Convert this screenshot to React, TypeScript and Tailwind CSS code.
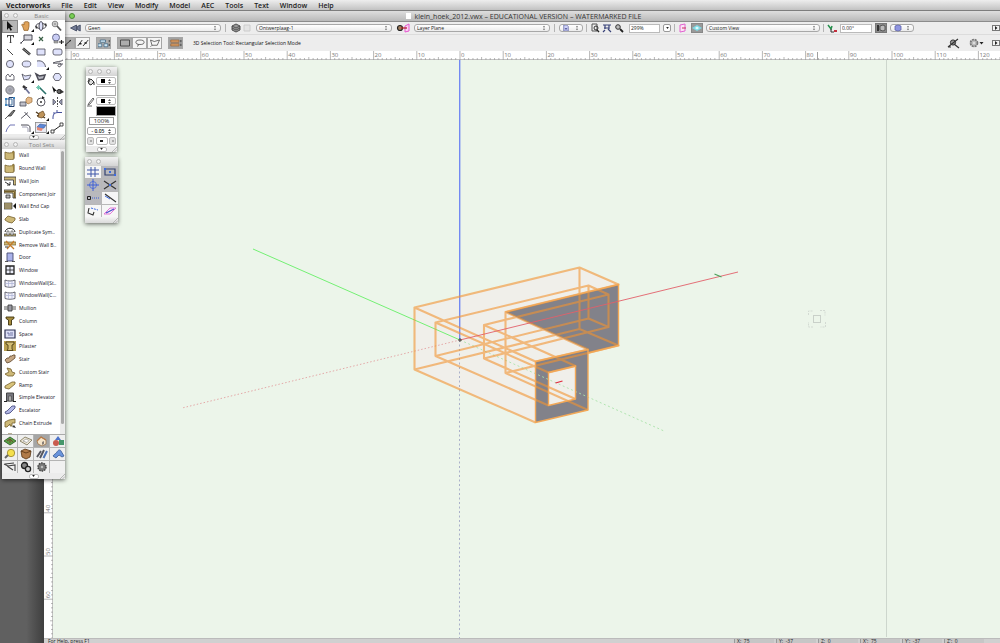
import React from "react";

type Glyph = { name: string; art: React.ReactNode };

const lav = "#dfe2fb";
const ink = "#4a4a55";
const tan = "#cdb877";
const brown = "#75602c";

const menus = ["File", "Edit", "View", "Modify", "Model", "AEC", "Tools", "Text", "Window", "Help"];

const flyout = <path d="M13 12h3v-3z" fill="#111" />;

const basicTools: Glyph[] = [
  { name: "Selection", art: <path d="M5 1l6 6H8.500l1.500 3-1.500.8L7 7.800 5 10z" fill="#111" /> },
  { name: "Pan", art: <><path d="M4.500 6l-1-1 1-1 1.500 1V2.500l1-1 1 .7 1-.9 1 .9 1 .2v4l-1 4H6z" fill="#e0a35a" stroke="#8a5a22" strokeWidth=".7" />{flyout}</> },
  { name: "Flyover", art: <><ellipse cx="8" cy="6" rx="5" ry="2.500" fill="none" stroke={ink} /><ellipse cx="8" cy="6" rx="2" ry="4.500" fill={lav} stroke={ink} /><path d="M3 9l-1-3 3 1zM13 3l1 3-3-1z" fill="#333" /></> },
  { name: "Zoom", art: <><circle cx="6" cy="4" r="2.800" fill="#ddd" stroke="#888" /><path d="M8 6l4 4.500" stroke="#555" strokeWidth="1.800" /><path d="M6 2.500v3M4.500 4h3" stroke="#777" strokeWidth=".6" /></> },
  { name: "Text", art: <path d="M5 2h7v2.500h-.7L10.700 3H9.100v6.400l1.200.6H6.800L8 9.400V3H6.300L5.700 4.500H5z" fill="#444" /> },
  { name: "Callout", art: <><path d="M6 2h8v5H6z" fill="#d7d7df" stroke={ink} /><path d="M6 7L3 10M2 10h2" stroke={ink} fill="none" />{flyout}</> },
  { name: "Locus", art: <path d="M6 4l4 4M10 4l-4 4" stroke="#395f45" strokeWidth="1.200" /> },
  { name: "Symbol", art: <><circle cx="7" cy="4.500" r="3.500" fill="#c9cdf5" stroke="#6a6d90" /><path d="M5 8h4v2H5z" fill="#aaa" stroke="#666" strokeWidth=".5" /><path d="M10 9h5M12.500 7v4" stroke="#222" strokeWidth="1.200" /></> },
  { name: "Line", art: <path d="M5 3l6 6" stroke="#333" strokeWidth=".9" /> },
  { name: "Double Line", art: <><path d="M5 2.500l7 6" stroke="#333" strokeWidth="2.600" /><path d="M5 2.500l7 6" stroke="#bbb" strokeWidth=".7" /></> },
  { name: "Rectangle", art: <path d="M4 3h8v6H4z" fill={lav} stroke={ink} strokeWidth=".8" /> },
  { name: "Rounded Rectangle", art: <rect x="4" y="3" width="9" height="6" rx="2" fill={lav} stroke={ink} strokeWidth=".8" /> },
  { name: "Circle", art: <circle cx="8" cy="6" r="3.600" fill={lav} stroke={ink} strokeWidth=".8" /> },
  { name: "Oval", art: <ellipse cx="8.500" cy="6" rx="4.300" ry="3" fill={lav} stroke={ink} strokeWidth=".8" /> },
  { name: "Arc", art: <><path d="M4 3c5-1 8 2 8.500 6H4z" fill={lav} /><path d="M4 3c5-1 8 2 8.500 6" fill="none" stroke={ink} strokeWidth=".9" />{flyout}</> },
  { name: "Freehand", art: <path d="M14 2c-2 2-6 1-10 3 3 1 7-1 8 1s-2 4-3 2 3-2 5-2" fill="none" stroke={ink} strokeWidth=".9" /> },
  { name: "Polyline", art: <path d="M4 9V5l2-2 2 3 2-3 2 2v4z" fill="#fff" stroke={ink} strokeWidth=".8" /> },
  { name: "Polygon", art: <><path d="M4 3l3 2 6-1-2 4-5 1z" fill={lav} stroke={ink} strokeWidth=".8" />{flyout}</> },
  { name: "Double Polygon", art: <path d="M3 3l3.500 2L12 4l-1.500 4-5 1z" fill="#b9bac4" stroke={ink} strokeWidth="1.500" /> },
  { name: "Regular Polygon", art: <path d="M6.200 2.500h4L12.500 6l-2.300 3.500h-4L4 6z" fill={lav} stroke={ink} strokeWidth=".8" /> },
  { name: "Spiral", art: <><circle cx="8" cy="6" r="4.300" fill="#9a9ca6" stroke="#777" strokeWidth=".6" /><circle cx="8" cy="6" r="2.500" fill="none" stroke="#c4c5cd" strokeWidth=".6" /></> },
  { name: "Eyedropper", art: <><path d="M5 2l3 2.500" stroke="#333" strokeWidth="2.400" /><path d="M7 4l4.500 5.500" stroke="#6f7399" strokeWidth="1.800" /><path d="M9 3L6.500 6" stroke="#333" /></> },
  { name: "Visibility", art: <><path d="M7 4l6 6" stroke="#2a7068" strokeWidth="1.600" /><path d="M5.500 1v5M3 3.500h5M4 2l3 3M7 2L4 5" stroke="#59bda3" strokeWidth=".8" /></> },
  { name: "Select Similar", art: <><path d="M3 2l5 5H6L5 9z" fill="#111" /><circle cx="10" cy="7.500" r="2" fill="#666" stroke="#222" /><path d="M11 5l4 3-4 2z" fill="#333" /></> },
  { name: "Reshape", art: <><path d="M4 3h6v6H4z" fill="none" stroke="#3c6d9b" /><path d="M7 1.500h5v9H7z" fill="none" stroke="#223f70" /><path d="M3 2h2v2H3zM3 8h2v2H3zM11 1h2v2h-2z" fill="#3d83bd" /></> },
  { name: "Move", art: <><path d="M2 6h6v4H2z" fill="#bdbec8" stroke={ink} strokeWidth=".8" /><path d="M8 3l2-2 4 1v4l-4 2-2-2z" fill="#e5b98a" stroke="#9c713a" strokeWidth=".7" /></> },
  { name: "Rotate", art: <><circle cx="8" cy="6" r="4" fill="#fff" stroke={ink} strokeWidth=".9" /><circle cx="8" cy="6" r="1" fill="#333" /><path d="M9 0l3 2-3 1z" fill="#222" /></> },
  { name: "Mirror", art: <><path d="M8.500 1v10" stroke="#222" strokeWidth=".8" strokeDasharray="2 1" /><path d="M4 3l3 3-3 3zM13 3l-3 3 3 3z" fill="#999cb5" stroke={ink} strokeWidth=".7" /></> },
  { name: "Split", art: <><path d="M3 10l4-4" stroke="#333" strokeWidth=".8" /><path d="M6 7l5-5.500h2L9 7z" fill="#777" stroke="#333" strokeWidth=".8" /></> },
  { name: "Connect", art: <path d="M3 9.500l7-6M6.500 3l6 6.500" stroke={ink} strokeWidth=".9" /> },
  { name: "Trim", art: <><path d="M3 3l9 6M4 7l7-2" stroke="#533d20" strokeWidth="1.500" /><path d="M6 4l4-2 2 4-3 3-4-1z" fill="#be945b" stroke="#5f421c" strokeWidth=".7" />{flyout}</> },
  { name: "Fillet", art: <path d="M4 10V8c0-3 2-4.500 5-4.500h4M4 4h2M8 1v2" stroke="#434f9b" fill="none" /> },
  { name: "Chamfer", art: <path d="M4 10l1-3 3-4h5" stroke="#7075b5" fill="none" /> },
  { name: "Offset", art: <><path d="M3 3h6c2 0 3 1 3 3v4" stroke={ink} fill="none" /><path d="M4 5h4c1.500 0 2 1 2 2v3" stroke="#8587a0" fill="none" strokeWidth=".8" />{flyout}</> },
  { name: "Clip", art: <><rect x="2.500" y=".5" width="11" height="10" fill="#e9e9f1" stroke="#888" strokeWidth=".8" /><path d="M4 5l3-3 6 1-2 3-6 1z" fill="#5c87d6" stroke="#2c4f92" strokeWidth=".5" /><path d="M4 5l6 1.500-1.500 2.500L4 8z" fill="#e58a76" />{flyout}</> },
  { name: "Dimension", art: <><path d="M4 9l7-5" stroke="#222" /><path d="M2 8h3v3H2zM11 1h3v3h-3z" fill="#fff" stroke="#222" strokeWidth=".8" /></> },
];

const slabArt = <path d="M1 5l3-3 7 2v2L8 9 4 8 1 6z" fill={tan} stroke={brown} strokeWidth=".8" />;
const wallArt = (
  <>
    <path d="M1 2c3 1.300 6 1.300 9 0v7c-3 1-6 1-9 0z" fill={tan} stroke={brown} strokeWidth=".8" />
    <path d="M8 2l2-1v7" fill="#a48d47" stroke={brown} strokeWidth=".6" />
  </>
);
const curtainArt = (
  <>
    <path d="M1 2c3 1.300 7 1.300 10 0v6.500c-3 1-7 1-10 0z" fill="#f1f1fb" stroke={ink} strokeWidth=".8" />
    <path d="M4.500 3v6M8 3v6M1 5.500h10" stroke="#abb0d2" strokeWidth=".7" />
  </>
);

const buildingTools: Glyph[] = [
  { name: "Wall", art: wallArt },
  { name: "Round Wall", art: wallArt },
  { name: "Wall Join", art: <><path d="M0 1h12v8H9.500V4H0z" fill={tan} stroke="#333" strokeWidth=".8" /><path d="M1 6l5 3M6 6v3H3" stroke="#222" strokeWidth=".9" fill="none" /></> },
  { name: "Component Joir", art: <><path d="M0 1h12v8H9V4H0z" fill={tan} stroke="#333" strokeWidth=".8" /><path d="M0 2.500h10.500V9" fill="none" stroke={brown} /><path d="M2 6h4v3H2z" fill="#bbb" stroke="#333" strokeWidth=".8" /></> },
  { name: "Wall End Cap", art: <><path d="M0 2h8v6H0z" fill={tan} stroke="#333" strokeWidth=".7" /><path d="M0 4h8M0 6h8" stroke="#555" strokeWidth=".8" /><path d="M12 2v6L9 5z" fill="#111" /></> },
  { name: "Slab", art: slabArt },
  { name: "Duplicate Sym..", art: <><path d="M1 5c1-5 9-5 10 0" fill="none" stroke="#222" /><path d="M0 7h12v2H0z" fill={tan} stroke="#333" strokeWidth=".7" /><path d="M3 4h2v4H3zM7 4h2v4H7z" fill="#fff" stroke="#333" strokeWidth=".6" /></> },
  { name: "Remove Wall B..", art: <><path d="M0 2h12v3H0z" fill={tan} stroke={brown} strokeWidth=".7" /><path d="M2 1l8 8M10 1L3 9" stroke="#c47c2a" strokeWidth="1.300" /><path d="M1 7h3" stroke="#333" /></> },
  { name: "Door", art: <><path d="M3 1h6v8H3z" fill="#aab2ea" stroke="#454a70" strokeWidth=".9" /><path d="M1 9.500h3M8 9.500h3" stroke="#333" strokeWidth=".8" /></> },
  { name: "Window", art: <><path d="M2 1h8v8H2z" fill="#eceefa" stroke="#222" strokeWidth="1.300" /><path d="M6 1v8M2 5h8" stroke="#222" strokeWidth=".8" /></> },
  { name: "WindowWall(St..", art: curtainArt },
  { name: "WindowWall(C...", art: curtainArt },
  { name: "Mullion", art: <><path d="M0 4h12M0 6h12" stroke="#333" strokeWidth=".8" /><path d="M4 2h4v6H4z" fill="#9a9aa2" stroke="#333" strokeWidth=".8" /></> },
  { name: "Column", art: <path d="M2 1h8v1.500L7.500 4v5h-3V4L2 2.500z" fill="#a68c3d" stroke="#40340f" strokeWidth=".9" /> },
  { name: "Space", art: <><path d="M1 1h10v8H1z" fill="#dcdff6" stroke="#2f3354" strokeWidth="1.200" /><path d="M3 4h2v3M6 4h3M6 6h3" stroke="#555b93" fill="none" strokeWidth=".8" /></> },
  { name: "Pilaster", art: <><path d="M0 0h12v10H0z" fill="#b9a050" /><path d="M2 1h8v2L8 4v4l1 1.500H3L4 8V4L2 3z" fill="#d3bd74" stroke="#40340f" strokeWidth=".8" /></> },
  { name: "Stair", art: <path d="M1 6l2-2 2 0 1-2h2l1-1h2v3L6 8 3 9z" fill="#c5a784" stroke="#5e452a" strokeWidth=".8" /> },
  { name: "Custom Stair", art: <path d="M3 1l4 1 1 3 3 1-2 3-5 0-3-2 4-2z" fill={tan} stroke={brown} strokeWidth=".8" /> },
  { name: "Ramp", art: <path d="M1 6l7-4 3 0v2L5 9 1 8z" fill="#d9c47b" stroke={brown} strokeWidth=".8" /> },
  { name: "Simple Elevator", art: <><path d="M2.500 1h7v8h-7z" fill="#77777f" stroke="#444" /><path d="M4.500 4h3v5h-3z" fill="#aaa" stroke="#444" strokeWidth=".6" /><path d="M0 9.500h3M9 9.500h3" stroke="#222" /></> },
  { name: "Escalator", art: <path d="M1 7l2-1 5-5 3 0v2L6 8 2 9z" fill="#b3b8e6" stroke="#4d5184" strokeWidth=".9" /> },
  { name: "Chain Extrude", art: <><path d="M1 4l4-2 6-1v4l-3 0v3H6V6L3 9H1z" fill={tan} stroke={brown} strokeWidth=".8" /><path d="M8 9l2-2 2 3z" fill="#333" /></> },
  { name: "Detail Viewport", art: <path d="M4 3h4v7H4z" fill={tan} stroke={brown} /> },
];

const sets: Glyph[] = [
  { name: "Site Planning", art: <><path d="M2 6l6-4 6 4-6 4z" fill="#58a346" stroke="#28541f" strokeWidth=".8" /><path d="M5 6l3-2 3 3M8 4v4" stroke="#7b3d2e" fill="none" strokeWidth=".9" /></> },
  { name: "Space Planning", art: <><path d="M2 6l5-4 7 3-5 5z" fill="#eee8d8" stroke="#777052" strokeWidth=".8" /><path d="M5 6l3-2 3 1.500-2 2z" fill="#fff" stroke="#888" strokeWidth=".6" /></> },
  { name: "Building Shell", art: <><path d="M3 6l4-4 5 3v4l-4 2-4-2z" fill="#f5e4c8" stroke="#9c754a" strokeWidth=".8" /><path d="M3 6l4-4 5 3" stroke="#b77a48" fill="none" strokeWidth="1.300" /><path d="M8 7l2-1v3l-2 1z" fill="#8a8078" /></> },
  { name: "Visualization", art: <><circle cx="6" cy="8" r="3" fill="#c95b4e" /><path d="M9 5h5v5H9z" fill="#46976b" /><path d="M8 1l3 4H5z" fill="#4e73c9" /></> },
  { name: "Lighting", art: <><circle cx="9" cy="5" r="3.700" fill="#f4df4d" stroke="#94832a" strokeWidth=".8" /><path d="M3 10l3-3" stroke="#666" strokeWidth="2" /></> },
  { name: "Furniture", art: <><path d="M3 3l4-2 6 2-1 6-4 2-4-2z" fill="#b07a48" stroke="#573411" strokeWidth=".8" /><path d="M3 3l5 2 5-2" stroke="#573411" fill="none" strokeWidth=".8" /></> },
  { name: "Detailing", art: <><path d="M3 9l4-6M6 10l4-8" stroke="#56565e" strokeWidth="1.900" /><path d="M9.500 10l3.500-7" stroke="#4d74b8" strokeWidth="1.900" /></> },
  { name: "MEP", art: <path d="M3 8c1-2 3-2 4-4s3-3 4-1l3 5-2 1-3-2-3 3z" fill="#6a94dc" stroke="#3a5a94" strokeWidth=".8" /> },
  { name: "Dims and Notes", art: <path d="M2 3l4 2 7-1v6M5 5l6 4M3 3l9-1" stroke="#444" strokeWidth="1.100" fill="none" /> },
  { name: "Fasteners", art: <><circle cx="6.500" cy="4.500" r="3" fill="#888" stroke="#222" strokeWidth="1.300" /><circle cx="10" cy="8" r="2.600" fill="#ccc" stroke="#222" strokeWidth="1.300" /></> },
  { name: "Machine Components", art: <><circle cx="8" cy="6" r="4" fill="#777" stroke="#444" strokeWidth="1.500" strokeDasharray="1.500 1" /><circle cx="8" cy="6" r="1.300" fill="#bbb" /></> },
];

const snaps: (Glyph & { on?: boolean })[] = [
  { name: "Snap to Grid", art: <path d="M6 1v10M10 1v10M2 4h12M2 8h12" stroke="#3f56a8" strokeWidth="1" /> },
  { name: "Snap to Object", on: true, art: <><path d="M3 3h10v6H3z" fill="none" stroke="#33416f" strokeWidth="1.200" /><path d="M7 5h2v2H7zM2 2h2v2H2zM12 8h2v2h-2z" fill="#3d6be0" /></> },
  { name: "Snap to Angle", on: true, art: <><circle cx="8" cy="6" r="3.500" fill="none" stroke="#5977d9" /><path d="M8 0v12M2 6h12" stroke="#3d5fd5" /></> },
  { name: "Snap to Intersection", on: true, art: <><path d="M2 2l12 8M2 10l12-8" stroke="#333" strokeWidth="1.200" /><path d="M7 5h2v2H7z" fill="#3d6be0" /></> },
  { name: "Smart Points", on: true, art: <><path d="M2.500 4.500h3v3h-3z" fill="none" stroke="#222" /><path d="M7 6h8" stroke="#3d5fd5" strokeDasharray="1 1" /></> },
  { name: "Snap to Distance", art: <><path d="M3 2l11 8" stroke="#333" strokeWidth="1.100" /><path d="M3 4l5 3" stroke="#3d6be0" /></> },
  { name: "Smart Edge", art: <><path d="M4 3l-1 5 5 2 1-3" fill="none" stroke="#333" strokeWidth="1.100" /><path d="M6 3l7 2" stroke="#3d6be0" strokeDasharray="2 1" /></> },
  { name: "Snap to Tangent", art: <><path d="M2 9l6-6 6 0-6 6z" fill="none" stroke="#e36bd3" strokeWidth=".9" /><path d="M4 8l8-4" stroke="#4a4ad0" strokeWidth="1.300" /></> },
];

function Icon({ children, className = "h-3 w-4", box = "0 0 16 12" }: { children: React.ReactNode; className?: string; box?: string }) {
  return (
    <svg viewBox={box} className={`shrink-0 ${className}`} fill="none" aria-hidden="true">
      {children}
    </svg>
  );
}

function Divider() {
  return <span className="h-2 w-px shrink-0 bg-[#b4b4b4]" />;
}

function Picker({ label, value, width, children }: { label: string; value: string; width: string; children?: React.ReactNode }) {
  return (
    <span className={`relative flex h-2 shrink-0 items-center ${width}`}>
      <select
        aria-label={label}
        className="h-2 w-full appearance-none rounded-[3px] border border-[#a8a8a8] bg-linear-to-b from-white to-[#ececec] pl-0.5 text-[5px] leading-[6px] font-medium text-[#222]"
      >
        <option>{value}</option>
      </select>
      {children && <span className="pointer-events-none absolute left-1">{children}</span>}
      <svg viewBox="0 0 4 6" className="pointer-events-none absolute right-1 h-1.5 w-1" aria-hidden="true">
        <path d="M1 2.200L2 .8l1 1.400zM1 3.800h2L2 5.200z" fill="#444" />
      </svg>
    </span>
  );
}

function MoreArrow() {
  return (
    <button aria-label="More options" className="flex h-1.5 w-2 shrink-0 items-center justify-center border border-[#777] bg-[#f4f4f4]">
      <svg viewBox="0 0 4 4" className="size-1"><path d="M1 0l2.500 2L1 4z" fill="#222" /></svg>
    </button>
  );
}

function Chrome({ title, dots }: { title?: string; dots: number }) {
  return (
    <div className="flex h-[9px] shrink-0 items-center bg-linear-to-b from-[#f2f2f2] to-[#d4d4d4] pl-0.5">
      <div className="flex gap-1">
        {Array.from({ length: dots }, (_, i) => (
          <span key={i} className="size-[5px] rounded-full border border-[#b5b5b5] bg-[#f1f1f1]" />
        ))}
      </div>
      {title && <span className="flex-1 text-center text-[6px] leading-2 text-[#858585]">{title}</span>}
    </div>
  );
}

function Foot() {
  return (
    <div className="relative flex h-1.5 shrink-0 items-center justify-center bg-[#ececec]">
      <button aria-label="Palette menu" className="flex h-[5px] w-2.5 items-center justify-center rounded-xs border border-[#bbb] bg-white">
        <svg viewBox="0 0 4 3" className="h-0.5 w-[3px]"><path d="M0 0h4L2 3z" fill="#222" /></svg>
      </button>
      <svg viewBox="0 0 5 5" className="absolute right-0 bottom-0 size-[5px]"><path d="M0 5l5-5M2.500 5L5 2.500" stroke="#aaa" strokeWidth=".8" /></svg>
    </div>
  );
}

const palette = "absolute z-10 flex flex-col rounded-t-xs bg-white shadow-[0_1px_4px_rgba(0,0,0,0.6)]";

function BasicPalette() {
  return (
    <section aria-label="Basic" className={`${palette} top-[11px] left-0.5 w-[63px]`}>
      <Chrome title="Basic" dots={2} />
      <div className="grid h-[114px] grid-cols-4 grid-rows-9">
        {basicTools.map((t, i) => (
          <button key={t.name} aria-label={t.name} className={`flex items-center justify-center overflow-hidden ${i === 0 ? "border border-[#888] bg-[#b5b5b5]" : ""}`}>
            <Icon>{t.art}</Icon>
          </button>
        ))}
      </div>
      <Foot />
    </section>
  );
}

function ToolSets() {
  return (
    <section aria-label="Tool Sets" className={`${palette} top-[140px] left-0.5 w-[63px]`}>
      <Chrome title="Tool Sets" dots={2} />
      <div className="flex h-[285px] overflow-hidden">
        <ul className="grid h-[293px] min-w-0 flex-1 grid-rows-23">
          {buildingTools.map((t) => (
            <li key={t.name} className="min-h-0">
              <button className="flex h-full w-full items-center gap-[3px] pl-0.5 text-[5px] leading-[6px] font-medium whitespace-nowrap text-[#16161f]">
                <Icon className="h-2.5 w-3" box="0 0 12 10">{t.art}</Icon>
                {t.name}
              </button>
            </li>
          ))}
        </ul>
        <div className="w-[5px] bg-[#ececec] px-px pt-0.5">
          <div className="h-[273px] rounded-full bg-[#a9a9a9]" />
        </div>
      </div>
      <div className="grid h-[39px] grid-cols-4 grid-rows-3 gap-px border-t border-[#aaa] bg-[#b4b4b4]">
        {sets.map((s, i) => (
          <button key={s.name} aria-label={s.name} className={`flex items-center justify-center overflow-hidden ${i === 2 ? "bg-[#a5a5a5]" : "bg-[#efefef]"}`}>
            <Icon>{s.art}</Icon>
          </button>
        ))}
        <span className="bg-[#f1f1f1]" />
      </div>
      <Foot />
    </section>
  );
}

function Attributes() {
  return (
    <section aria-label="Attributes" className={`${palette} top-[67px] left-[86px] w-[31px] bg-[#ececec]`}>
      <Chrome dots={3} />
      <div className="flex flex-col gap-px px-px py-px text-[#222]">
        {[["Fill", "bg-white"], ["Pen", "bg-black"]].map(([name, swatch]) => (
          <div key={name} className="flex h-[19px] gap-px">
            <Icon className="h-2.5 w-2" box="0 0 8 10">
              {name === "Fill" ? (
                <path d="M1 4l3-2 3 3-3 3-2-1zM2 1v4M7 5v3" fill="#ddd" stroke="#333" />
              ) : (
                <path d="M1 8l1-2 4-5 1 1-4 5zM0 9h5" fill="#fff" stroke="#555" strokeWidth=".9" />
              )}
            </Icon>
            <div className="flex flex-1 flex-col gap-px">
              <button aria-label={`${name} style`} className="flex h-2 items-center justify-between rounded-xs border border-[#bbb] bg-white px-1">
                <span className="size-1 bg-black" />
                <svg viewBox="0 0 3 5" className="h-[5px] w-[3px]"><path d="M0 2l1.500-2L3 2zM0 3h3L1.500 5z" fill="#555" /></svg>
              </button>
              <button aria-label={`${name} color`} className={`flex-1 border border-[#aaa] ${swatch}`} />
            </div>
          </div>
        ))}
        <button className="mx-0.5 h-2 border border-[#999] bg-white text-[6px] leading-[6px]">100%</button>
        <button className="mt-px flex h-2 items-center justify-center gap-1 rounded-xs border border-[#aaa] bg-white text-[5px] leading-[6px] font-semibold">
          <span>- 0.05</span>
          <svg viewBox="0 0 3 5" className="h-[5px] w-[3px]"><path d="M0 2l1.500-2L3 2zM0 3h3L1.500 5z" fill="#555" /></svg>
        </button>
        <div className="mt-px flex h-2 justify-between gap-px">
          {["Start marker", "Marker style", "End marker"].map((m, i) => (
            <button key={m} aria-label={m} className={`flex items-center justify-center rounded-xs border border-[#bbb] ${i === 1 ? "w-3 bg-white" : "w-[7px] bg-[#e2e2e2]"}`}>
              <span className={`h-0.5 ${i === 1 ? "w-[3px] bg-[#222]" : "w-0.5 bg-[#aaa]"}`} />
            </button>
          ))}
        </div>
      </div>
      <Foot />
    </section>
  );
}

function Snapping() {
  return (
    <section aria-label="Snapping" className={`${palette} top-[157px] left-[85px] w-[33px]`}>
      <Chrome dots={2} />
      <div className="grid h-[51px] grid-cols-2 grid-rows-4 gap-px bg-[#b8b8b8]">
        {snaps.map((s) => (
          <button key={s.name} aria-label={s.name} className={`flex items-center justify-center overflow-hidden ${s.on ? "bg-[#b9b9bd]" : "bg-[#f6f6f6]"}`}>
            <Icon>{s.art}</Icon>
          </button>
        ))}
      </div>
      <div className="flex h-1.5 items-end justify-end bg-linear-to-b from-[#f4f4f4] to-[#dadada]">
        <svg viewBox="0 0 5 5" className="size-[5px]"><path d="M0 5l5-5M2.500 5L5 2.500" stroke="#aaa" strokeWidth=".8" /></svg>
      </div>
    </section>
  );
}

const STEP = 43.2;

function TopRuler() {
  const ticks = Array.from({ length: 230 }, (_, i) => i - 98);
  return (
    <svg className="block h-[9px] w-full shrink-0 bg-white" aria-label="Horizontal ruler">
      <g transform="translate(416 0)">
        {ticks.map((n) => (
          <path key={n} d={`M${(n * STEP) / 10} ${n % 10 === 0 ? 0 : n % 5 === 0 ? 6 : 7}V9`} stroke="#9a9a9a" strokeWidth=".7" />
        ))}
        {Array.from({ length: 22 }, (_, i) => i - 9).map((n) => (
          <text key={n} x={n * STEP + 1} y="6" fontSize="6" fill="#777">{Math.abs(n * 10)}</text>
        ))}
        <path d="M357.500 1v8" stroke="#777" strokeWidth=".7" />
        <path d="M-416 8.500h1400" stroke="#999" strokeWidth=".6" />
      </g>
    </svg>
  );
}

function SideRuler() {
  const ticks = Array.from({ length: 110 }, (_, i) => i - 30);
  return (
    <svg className="block w-[9px] shrink-0 bg-white" aria-label="Vertical ruler">
      <g transform="translate(0 280)">
        {ticks.map((n) => (
          <path key={n} d={`M${n % 10 === 0 ? 0 : n % 5 === 0 ? 6 : 7} ${(n * STEP) / 10}H9`} stroke="#9a9a9a" strokeWidth=".7" />
        ))}
        {[-20, -10, 0, 10, 20, 30, 40, 50, 60].map((n) => (
          <text key={n} transform={`translate(6 ${(n * STEP) / 10 - 1}) rotate(-90)`} fontSize="6" fill="#777">{Math.abs(n)}</text>
        ))}
        <path d="M8.500 -280v1200" stroke="#999" strokeWidth=".6" />
      </g>
    </svg>
  );
}

function Drawing() {
  return (
    <svg className="absolute inset-0 size-full" aria-label="3D model view">
      <g transform="translate(-53 -60)" fill="none">
        <path d="M886.500 60V637" stroke="#cdd6cd" />
        <path d="M414.500 307.500L579.500 267.500 618.500 284.500V345.500L588 353V410L535.500 422.500 414.500 369.500z" fill="#f0efea" />
        <path d="M505.500 312L618.500 284.500V345.500L588 353V349.500z" fill="#82828a" />
        <path d="M535.500 361.500L588 349.500V410L535.500 422.500zM548.500 372.500V405.500L575.500 399V366z" fill="#82828a" fillRule="evenodd" />
        <path d="M459.700 60V340" stroke="#7389f2" strokeWidth="1.400" />
        <path d="M459.500 340V640" stroke="#aab0ca" strokeDasharray="2 2.500" />
        <path d="M460 340L253 249" stroke="#74f074" />
        <path d="M460 340L664 431" stroke="#a9e2a9" strokeWidth=".9" strokeDasharray="2 2.500" />
        <path d="M460 340L182 408" stroke="#e2a0a0" strokeWidth=".9" strokeDasharray="1.500 2" />
        <g opacity=".6" stroke="#f29330" strokeWidth="2.100" strokeLinejoin="round">
          <path d="M414.500 307.500L579.500 267.500 618.500 284.500 505.500 312 588 349.500 535.500 361.500zM414.500 307.500V369.500L535.500 422.500M414.500 369.500L579.500 329V267.500M579.500 329L618.500 345.500 505.500 373V312M505.500 373L588 410M435.500 322.500L588.500 285.500 608.500 294.500 484 325 575.500 366 548.500 372.500zM435.500 322.500V356L548.500 405.500M435.500 356L588.500 318.500V285.500M588.500 318.500L608.500 327V294.500M608.500 327L484 358.500V325M484 358.500L575.500 399" />
        </g>
        <path d="M505.500 312L618.500 284.500V345.500L588 353M588 349.500L535.500 361.500V422.500L588 410zM548.500 372.500V405.500L575.500 399V366z" stroke="#f2a857" strokeWidth="1.400" strokeLinejoin="round" />
        <path d="M460 340L738 272" stroke="#e2606a" strokeWidth=".9" />
        <path d="M714.500 274l7 3" stroke="#4ba35a" strokeWidth="1.200" />
        <path d="M555.500 383l7-2" stroke="#e0293c" strokeWidth="1.200" />
        <path d="M458 340h4M460 338v4" stroke="#333" strokeWidth=".8" />
        <rect x="813.500" y="315.500" width="7" height="7" stroke="#c9d0c9" />
        <path d="M808.500 315v-4h5M820 310.500h5v5M825.500 322v5h-5M813 327h-4.500v-5" stroke="#d3dad3" strokeDasharray="2 1" />
      </g>
    </svg>
  );
}

function ViewBar() {
  return (
    <div className="flex h-[13px] shrink-0 items-center gap-1 border-b border-[#dcdcdc] bg-[#ededed] pl-[25px]">
      <Icon className="h-2.5 w-3"><path d="M2 6l8-4v8zM11 4l4-2v8l-4-2z" fill="#727b95" stroke="#333c55" /></Icon>
      <Picker label="Class" value="Geen" width="w-[136px]" />
      <Divider />
      <div className="flex items-center gap-px pl-px">
        <Icon className="size-2.5" box="0 0 10 10"><path d="M1 3l4-2 4 2v4L5 9 1 7z" fill="#999" stroke="#444" strokeWidth=".9" /><path d="M1 3l4 2 4-2M1 5l4 2 4-2" stroke="#444" strokeWidth=".8" /></Icon>
        <Icon className="size-2.5" box="0 0 10 10"><path d="M2 2h6v6H2z" fill="#e4e4e4" stroke="#ccc" /></Icon>
      </div>
      <Picker label="Layer" value="Ontwerplaag-1" width="w-[136px]" />
      <Icon className="h-2.5 w-3.5" box="0 0 14 10"><path d="M9 3l4-2v7l-4 1z" fill="#fbd3f3" stroke="#e459cf" /><circle cx="4" cy="5" r="2.500" fill="#a07c5b" stroke="#222" strokeWidth="1.200" /><path d="M5 5h6" stroke="#b3262c" strokeWidth="1.300" /></Icon>
      <Picker label="Active plane" value="Layer Plane" width="w-[136px]" />
      <Divider />
      <div className="flex flex-1 items-center gap-[3px]">
        <Picker label="Saved views" value="" width="w-[24px]">
          <Icon className="size-1.5" box="0 0 8 8"><path d="M1 0h4l2 2v6H1z" fill="#cfd3f7" stroke="#6468a8" /><path d="M2.500 4h3v2h-3z" fill="#6468a8" /></Icon>
        </Picker>
        <Divider />
        <div className="flex items-center gap-0.5">
          <Icon className="size-2.5" box="0 0 10 10"><path d="M2 1h5v7H2z" fill="#eee" stroke="#555" /><circle cx="6" cy="5" r="2" stroke="#333" /><path d="M7 7l2 2" stroke="#222" strokeWidth="1.400" /></Icon>
          <Icon className="size-2.5" box="0 0 10 10"><path d="M1 2h8M2 5h5M3 2v4M7 2v4M1 9l2-2M6 6l3 3" stroke="#394379" strokeWidth="1.200" /></Icon>
          <Icon className="size-2.5" box="0 0 10 10"><circle cx="4" cy="4" r="2.300" fill="#bbb" stroke="#333" /><path d="M6 6l3 3" stroke="#222" strokeWidth="1.800" /></Icon>
        </div>
        <div className="flex items-center gap-[3px] pl-0.5">
          <input aria-label="Zoom" defaultValue="299%" className="h-[9px] w-[31px] border border-[#bbb] bg-white px-px text-[5px] leading-[7px] font-medium text-[#222]" />
          <button aria-label="Zoom presets" className="flex size-2 items-center justify-center rounded-xs border border-[#999] bg-white">
            <svg viewBox="0 0 4 3" className="h-0.5 w-[3px]"><path d="M0 0h4L2 3z" fill="#222" /></svg>
          </button>
        </div>
        <Divider />
        <Icon className="size-2.5" box="0 0 10 10"><path d="M2 2l5-1v7l-5 1z" fill="#fbe3f7" stroke="#e263cf" /><path d="M4 5h4" stroke="#c9355f" /></Icon>
        <button aria-label="Top plan" className="flex h-2.5 w-3 items-center justify-center border border-[#888] bg-[#999]">
          <Icon className="h-2 w-2.5" box="0 0 10 8"><path d="M0 4l5-3 5 3-5 3z" fill="#7fdbe6" /><path d="M3 4l2-1.500L7 4 5 5.500z" fill="#e6fbfd" /></Icon>
        </button>
        <Picker label="View" value="Custom View" width="w-[114px]" />
        <Divider />
        <Icon className="size-2.5" box="0 0 10 10"><path d="M1 2l3 4 1-3" stroke="#238f4b" strokeWidth="1.500" /><path d="M4 6v3h3" stroke="#333" /><path d="M7 7h3v2H7z" fill="#c42e3d" /></Icon>
        <input aria-label="Rotation" defaultValue="0.00°" className="h-[9px] w-8 shrink-0 border border-[#bbb] bg-white px-px text-[5px] leading-[7px] font-medium text-[#222]" />
        <button aria-label="Projection" className="flex h-2.5 w-3 items-center justify-center border border-[#777] bg-[#8b8b8b]">
          <Icon className="h-2 w-2.5" box="0 0 10 8"><path d="M1 1h2v6H1z" fill="#333" /><path d="M4 2l3-1 2 1v4L7 7 4 6z" fill="#bbb" stroke="#444" strokeWidth=".8" /></Icon>
        </button>
        <Picker label="Render mode" value="" width="w-[24px]">
          <Icon className="size-2" box="0 0 8 8"><path d="M1 2l3-1 3 1v4L4 7 1 6z" fill="#8f95e0" stroke="#5f64ad" strokeWidth=".8" /></Icon>
        </Picker>
        <span className="flex-1" />
        <MoreArrow />
      </div>
    </div>
  );
}

function ModeBar() {
  const cell = "flex h-3 w-[15px] items-center justify-center border border-[#a5a5a5]";
  return (
    <div className="flex h-4 shrink-0 items-center bg-[#ededed] pl-4">
      <button aria-label="Single object mode" className={`${cell} bg-[#adadad]`}><Icon className="h-2.5 w-3"><path d="M3 10l9-8M4 9h2M10 3h2" stroke="#222" strokeWidth="1.200" /></Icon></button>
      <button aria-label="Multiple object mode" className={`${cell} bg-[#f5f5f5]`}><Icon className="h-2.5 w-3"><path d="M1 10l6-8M8 10l7-8" stroke="#222" strokeWidth="1.200" /><path d="M3 6h3v2H3zM10 5h3v2h-3z" fill="#222" /></Icon></button>
      <span className="mx-[3px]"><Divider /></span>
      <button aria-label="Interactive scaling" className={`${cell} bg-[#adadad]`}><Icon className="h-2.5 w-3"><path d="M3 2h7v3H3zM0 7h5v4H0zM8 7h5v4H8z" fill="#cfe9f6" stroke="#2f5878" strokeWidth=".9" /><path d="M15 2v3M15 7v3" stroke="#222" /></Icon></button>
      <span className="mx-[3px]"><Divider /></span>
      <button aria-label="Rectangular marquee" className={`${cell} bg-[#adadad]`}><Icon className="h-2.5 w-3"><path d="M2 2h12v8H2z" stroke="#444" strokeWidth="1.200" /></Icon></button>
      <button aria-label="Lasso marquee" className={`${cell} bg-[#f5f5f5]`}><Icon className="h-2.5 w-3"><ellipse cx="8" cy="5" rx="5.500" ry="3" stroke="#444" /><path d="M5 7.500c2 1 1 2-1 3" stroke="#444" /></Icon></button>
      <button aria-label="Polygonal marquee" className={`${cell} bg-[#f5f5f5]`}><Icon className="h-2.5 w-3"><path d="M2 2l5 2 7-2-3 7H4z" stroke="#444" /><path d="M4 9l-2 2" stroke="#444" /></Icon></button>
      <span className="mx-[3px]"><Divider /></span>
      <button aria-label="Wall insertion" className={`${cell} bg-[#a2a2a2]`}><Icon className="h-2.5 w-3"><path d="M1 2h11v3H1zM1 7h11v3H1z" fill="#d69a63" stroke="#8a5a30" strokeWidth=".8" /><path d="M14.500 2v3M14.500 7v3" stroke="#222" /></Icon></button>
      <p className="ml-2.5 text-[5px] leading-[6px] font-medium whitespace-nowrap text-[#111]">3D Selection Tool: Rectangular Selection Mode</p>
      <span className="flex-1" />
      <Icon className="mr-2 h-3 w-3.5" box="0 0 14 12"><circle cx="7" cy="5.500" r="2.600" fill="#999" stroke="#333" /><path d="M2 10L12 2M2 10h3M8 7l5 4" stroke="#333" strokeWidth="1.200" /></Icon>
      <Icon className="mr-2 h-3 w-4"><circle cx="6" cy="6" r="3.500" fill="#bbb" stroke="#777" strokeWidth="1.700" strokeDasharray="2 .8" /><circle cx="6" cy="6" r="1.200" fill="#ddd" /><path d="M11.500 5h4l-2 2.500z" fill="#222" /></Icon>
      <MoreArrow />
    </div>
  );
}

export default function App() {
  return (
    <div className="relative flex h-screen flex-col overflow-hidden bg-[#5e5e5e] font-['Open_Sans','Noto_Sans',sans-serif]">
      <nav className="flex h-[11px] shrink-0 items-center gap-[11px] border-b border-[#7d7d7d] bg-linear-to-b from-[#eeeeee] to-[#c2c2c2] pl-1.5 text-[7px] leading-[9px] text-[#1c1c1c]">
        <a href="#app" className="font-bold">Vectorworks</a>
        {menus.map((m) => (
          <a key={m} href={`#${m}`} className="font-semibold">{m}</a>
        ))}
      </nav>
      <div className="flex min-h-0 flex-1">
        <div className="w-11 shrink-0 bg-linear-to-r from-[#606060] from-60% to-[#3f3f3f]" />
        <main className="flex min-w-0 flex-1 flex-col">
          <header className="flex h-[11px] shrink-0 items-center border-b border-[#8c8c8c] bg-linear-to-b from-[#dedede] to-[#b9b9b9] pl-[25px]">
            <button aria-label="Zoom window" className="size-1.5 rounded-full border border-[#4c8a35] bg-[#79cf56]" />
            <h1 className="flex flex-1 items-center justify-center gap-1 pr-7 text-[7px] leading-[9px] text-[#333]">
              <span className="h-1.5 w-[5px] bg-white" />
              klein_hoek_2012.vwx – EDUCATIONAL VERSION – WATERMARKED FILE
            </h1>
          </header>
          <ViewBar />
          <ModeBar />
          <TopRuler />
          <div className="flex min-h-0 flex-1">
            <SideRuler />
            <div className="relative min-w-0 flex-1 bg-[#ecf5ea]">
              <Drawing />
            </div>
          </div>
          <footer className="flex h-[5px] shrink-0 justify-between border-t border-[#bbb] bg-[#d0d0d0] text-[5px] leading-[4px] font-medium text-[#222]">
            <span className="pl-1">For Help, press F1</span>
            <div className="flex gap-0.5 pr-4">
              {["X:  75", "Y:  -37", "Z:  0", "X':  75", "Y':  -37", "Z':  0"].map((c) => (
                <span key={c} className="w-10 border-l border-[#999] bg-[#c6c6c6] pl-0.5 whitespace-pre">{c}</span>
              ))}
            </div>
          </footer>
        </main>
      </div>
      <BasicPalette />
      <ToolSets />
      <Attributes />
      <Snapping />
    </div>
  );
}
